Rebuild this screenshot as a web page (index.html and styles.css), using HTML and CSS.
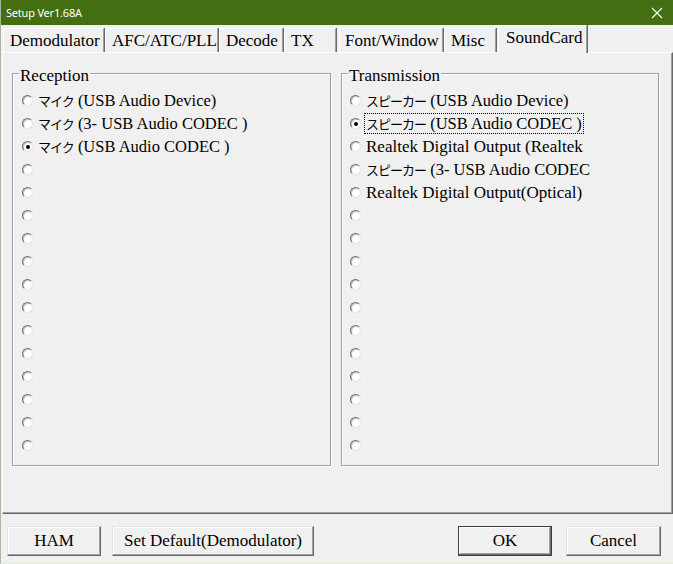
FILE: index.html
```html
<!DOCTYPE html>
<html>
<head>
<meta charset="utf-8">
<title>Setup Ver1.68A</title>
<link rel="stylesheet" href="styles.css">
</head>
<body>
<div class="window">
  <div class="titlebar">
    <span class="title">Setup Ver1.68A</span>
    <svg class="close" width="12" height="12" viewBox="0 0 12 12"><path d="M1 1 L11 11 M11 1 L1 11" stroke="#ffffff" stroke-width="1.1" fill="none"/></svg>
  </div>
  <div class="tabs">
    <div class="tab t-demod">Demodulator</div>
    <div class="tab t-afc">AFC/ATC/PLL</div>
    <div class="tab t-decode">Decode</div>
    <div class="tab t-tx">TX</div>
    <div class="tab t-font">Font/Window</div>
    <div class="tab t-misc">Misc</div>
    <div class="tab active t-sound">SoundCard</div>
  </div>
  <div class="panel">
    <fieldset class="group g-left">
      <legend>Reception</legend>
      <div class="list">
        <div class="row"><span class="radio"></span><span class="label mixed"><span class="ja">マイク</span> (USB Audio Device)</span></div>
        <div class="row"><span class="radio"></span><span class="label mixed"><span class="ja">マイク</span> (3- USB Audio CODEC )</span></div>
        <div class="row"><span class="radio checked"></span><span class="label mixed"><span class="ja">マイク</span> (USB Audio CODEC )</span></div>
        <div class="row"><span class="radio"></span></div>
        <div class="row"><span class="radio"></span></div>
        <div class="row"><span class="radio"></span></div>
        <div class="row"><span class="radio"></span></div>
        <div class="row"><span class="radio"></span></div>
        <div class="row"><span class="radio"></span></div>
        <div class="row"><span class="radio"></span></div>
        <div class="row"><span class="radio"></span></div>
        <div class="row"><span class="radio"></span></div>
        <div class="row"><span class="radio"></span></div>
        <div class="row"><span class="radio"></span></div>
        <div class="row"><span class="radio"></span></div>
        <div class="row"><span class="radio"></span></div>
      </div>
    </fieldset>
    <fieldset class="group g-right">
      <legend>Transmission</legend>
      <div class="list">
        <div class="row"><span class="radio"></span><span class="label mixed"><span class="ja">スピーカー</span> (USB Audio Device)</span></div>
        <div class="row"><span class="radio checked"></span><span class="label mixed focus"><span class="ja">スピーカー</span> (USB Audio CODEC )</span></div>
        <div class="row"><span class="radio"></span><span class="label">Realtek Digital Output (Realtek</span></div>
        <div class="row"><span class="radio"></span><span class="label mixed"><span class="ja">スピーカー</span> (3- USB Audio CODEC</span></div>
        <div class="row"><span class="radio"></span><span class="label">Realtek Digital Output(Optical)</span></div>
        <div class="row"><span class="radio"></span></div>
        <div class="row"><span class="radio"></span></div>
        <div class="row"><span class="radio"></span></div>
        <div class="row"><span class="radio"></span></div>
        <div class="row"><span class="radio"></span></div>
        <div class="row"><span class="radio"></span></div>
        <div class="row"><span class="radio"></span></div>
        <div class="row"><span class="radio"></span></div>
        <div class="row"><span class="radio"></span></div>
        <div class="row"><span class="radio"></span></div>
        <div class="row"><span class="radio"></span></div>
      </div>
    </fieldset>
  </div>
  <div class="footer">
    <div class="btn-group">
      <button class="btn b-ham">HAM</button>
      <button class="btn b-default">Set Default(Demodulator)</button>
    </div>
    <div class="btn-group right">
      <button class="btn b-ok default">OK</button>
      <button class="btn b-cancel">Cancel</button>
    </div>
  </div>
</div>
</body>
</html>
```
FILE: styles.css
```css
* { box-sizing: border-box; }
html, body {
  margin: 0;
  padding: 0;
  background: #f0f0f0;
}
.window {
  width: 673px;
  height: 564px;
  background: #f0f0f0;
  font-family: "Liberation Serif", "Noto Sans CJK JP", serif;
  font-size: 17px;
  color: #000;
  display: flex;
  flex-direction: column;
  border-left: 1px solid #a9b79c;
  border-bottom: 1px solid #e3ecd9;
  overflow: hidden;
}
.titlebar {
  height: 25px;
  flex: none;
  background: #436f12;
  display: flex;
  align-items: center;
  justify-content: space-between;
  padding: 0 10px 0 6px;
  margin-left: -1px;
}
.title {
  font-family: "Noto Sans", "Open Sans", sans-serif;
  font-size: 11px;
  color: #ffffff;
  letter-spacing: -0.2px;
}
.close { display: block; }

.tabs {
  height: 27px;
  flex: none;
  display: flex;
  align-items: flex-end;
  padding-left: 2px;
  position: relative;
  z-index: 2;
}
.tab {
  height: 24px;
  line-height: 23px;
  padding-left: 6px;
  border-top: 1px solid #ffffff;
  border-left: 1px solid #ffffff;
  border-right: 1px solid #a0a0a0;
  box-shadow: 1px 0 0 #696969;
  margin-right: 1px;
  white-space: nowrap;
  background: #f0f0f0;
}
.t-demod { width: 101px; }
.t-afc { width: 113px; }
.t-decode { width: 64px; }
.t-tx { width: 52px; margin-right: 3px; }
.t-font { width: 104px; padding-left: 5px; }
.t-misc { width: 52px; }
.tab.active {
  height: 28px;
  width: 89px;
  margin-left: 1px;
  margin-bottom: -1px;
  line-height: 23px;
  padding-left: 7px;
  border-right: 1px solid #a0a0a0;
  box-shadow: 1px 0 0 #696969;
}

.panel {
  height: 462px;
  flex: none;
  margin: 0 0 0 1px;
  width: 671px;
  border-top: 1px solid #ffffff;
  border-left: 1px solid #ffffff;
  border-right: 1px solid #696969;
  border-bottom: 1px solid #696969;
  box-shadow: inset -1px -1px 0 #a0a0a0;
  display: flex;
  gap: 10px;
  padding: 9px 0 0 9px;
  position: relative;
  z-index: 1;
}
.group {
  margin: 0;
  padding: 0;
  height: 404px;
  border: 1px solid #a0a0a0;
  box-shadow: 1px 1px 0 #ffffff, inset 1px 1px 0 #ffffff;
  min-width: 0;
}
.g-left { width: 319px; }
.g-right { width: 318px; }
.group legend {
  margin-left: 6px;
  padding: 4px 1px 0 1px;
  line-height: 19px;
}
.list {
  display: flex;
  flex-direction: column;
  padding: 4px 0 0 9px;
}
.g-right .list { padding-left: 8px; }
.row {
  height: 23px;
  display: flex;
  align-items: center;
  white-space: nowrap;
}
.radio {
  width: 11px;
  height: 11px;
  flex: none;
  border-radius: 50%;
  background: #ffffff;
  border: 1px solid;
  border-color: #6e6e6e #e4e4e4 #e4e4e4 #6e6e6e;
  box-shadow: inset 1px 1px 0 #c4c4c4;
  margin-right: 4px;
  display: flex;
  align-items: center;
  justify-content: center;
}
.radio.checked::after {
  content: "";
  width: 4px;
  height: 4px;
  border-radius: 50%;
  background: #000;
}
.label {
  line-height: 19px;
  padding: 0 1px;
  margin-left: -1px;
  border: 1px solid transparent;
}
.label.mixed {
  font-size: 16.5px;
}
.label.focus {
  border: 1px dotted #000;
}
.ja {
  font-family: "Noto Sans CJK JP", sans-serif;
  font-size: 13px;
  font-weight: 400;
  letter-spacing: -1px;
}

.footer {
  flex: 1;
  display: flex;
  justify-content: space-between;
  padding: 12px 12px 0 6px;
}
.btn-group {
  display: flex;
  gap: 11px;
  align-items: flex-start;
}
.btn-group.right { gap: 14px; }
.btn {
  height: 30px;
  font-family: "Liberation Serif", serif;
  font-size: 17px;
  color: #000;
  background: #f0f0f0;
  border: 1px solid;
  border-color: #e3e3e3 #696969 #696969 #e3e3e3;
  box-shadow: inset -1px -1px 0 #a0a0a0, inset 1px 1px 0 #ffffff;
  padding: 0;
  margin: 0;
}
.b-ham { width: 94px; }
.b-default { width: 202px; }
.b-ok { width: 94px; }
.b-cancel { width: 95px; }
.btn.default {
  border-color: #3c3c3c;
  box-shadow: inset -1px -1px 0 #696969, inset 1px 1px 0 #ffffff, inset -2px -2px 0 #a0a0a0;
}
```
